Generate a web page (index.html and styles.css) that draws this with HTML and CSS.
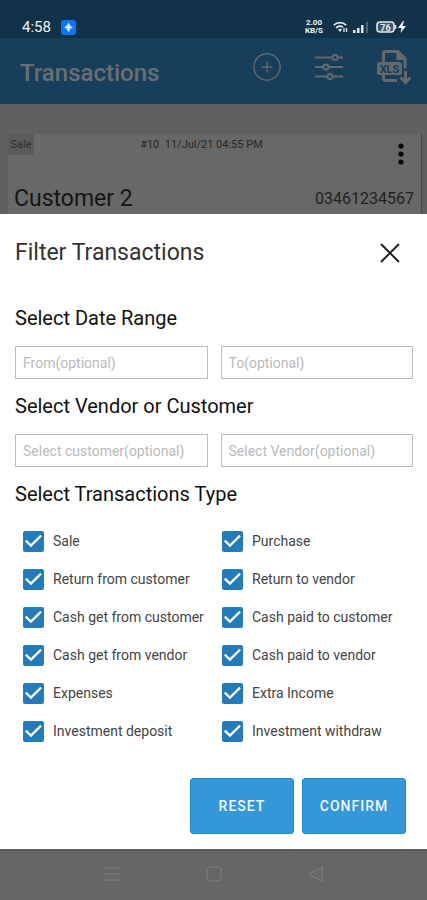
FILE: index.html
```html
<!DOCTYPE html>
<html lang="en">
<head>
<meta charset="utf-8">
<meta name="viewport" content="width=device-width, initial-scale=1">
<title>Filter Transactions</title>
<link rel="stylesheet" href="styles.css">
</head>
<body>
<div class="status">
  <span class="clock">4:58</span>
  <svg class="badge" width="15" height="15" viewBox="0 0 15 15"><rect width="15" height="15" rx="3" fill="#0b76f5"/><path d="M7.500 2.500L9.500 5.500L12 7.500L9.500 9L7.500 12.500L5.500 9L3 7.500L5.500 5.500Z" fill="#a9d4ff"/><path d="M7.500 5v5M5 7.500h5" stroke="#fff" stroke-width="1"/></svg>
  <span class="speed"><span>2.00</span><span>KB/S</span></span>
  <svg class="wifi" width="15" height="12" viewBox="0 0 15 12" fill="none" stroke="#e4e9ee" stroke-width="1.700"><path d="M.8 4.200C4.300.8 9.700.8 13.200 4.200M3 6.800C5.300 4.800 8.200 4.800 10 6.300"/><path d="M5 8.300L7 11L9 8.300Q7 7 5 8.300Z" fill="#e4e9ee" stroke="none"/><path d="M11 7v4M13.500 7v4" stroke-width="1.300"/></svg>
  <svg class="signal" width="16" height="12" viewBox="0 0 16 12"><path d="M0 9h2.500v3H0zM4 7h2.500v5H4zM8 4h2.500v8H8z" fill="#e4e9ee"/><path d="M13 1h2v11h-2z" fill="#4b6577"/></svg>
  <svg class="battery" width="31" height="14" viewBox="0 0 31 14"><rect x="1" y="2" width="17" height="10" rx="3" fill="#3d586a" stroke="#e4e9ee" stroke-width="1.600"/><path d="M19.500 5v4" stroke="#e4e9ee" stroke-width="1.500"/><text x="9.500" y="10.500" text-anchor="middle" class="battery-level">76</text><path d="M27 1L22 8h3.500L24.500 13L30 6h-3.500L28 1Z" fill="#f4f6f8"/></svg>
</div>
<header class="appbar">
  <h1>Transactions</h1>
  <button type="button" aria-label="Add"><svg width="30" height="30" viewBox="0 0 30 30" fill="none" stroke="#66696c" stroke-width="1.400"><circle cx="15" cy="15" r="13.200"/><path d="M15 9.500v11M9.500 15h11"/></svg></button>
  <button type="button" aria-label="Filter"><svg width="30" height="30" viewBox="0 0 30 30" fill="none" stroke="#66696c" stroke-width="2"><path d="M1 5.500h17M24 5.500h5M1 15h8M15 15h14M1 24.500h12M19 24.500h10"/><circle cx="21" cy="5.500" r="2.600"/><circle cx="12" cy="15" r="2.600"/><circle cx="16" cy="24.500" r="2.600"/></svg></button>
  <button type="button" aria-label="Export XLS"><svg width="36" height="36" viewBox="0 0 36 36" fill="none" stroke="#66696c" stroke-width="3"><path d="M7.500 13V5q0-2.500 2.500-2.500h12l7 7v10M7.500 25v4.500q0 2 2.500 2h11"/><path d="M20.500 2v9h9Z" fill="#66696c" stroke="none"/><rect x="1" y="13" width="25" height="13" rx="2.500" fill="#66696c" stroke="none"/><path d="M29.500 22v11M24.500 28.500l5 5l5-5"/><text x="13.500" y="23.500" text-anchor="middle" class="xls">XLS</text></svg></button>
</header>
<main class="page">
  <article class="card">
    <div class="card-top">
      <span class="tag">Sale</span>
      <span class="ref">#10&nbsp; 11/Jul/21 04:55 PM</span>
      <button type="button" aria-label="More"><svg width="6" height="22" viewBox="0 0 6 22" fill="#0b0b0b"><circle cx="3" cy="3" r="2.600"/><circle cx="3" cy="11" r="2.600"/><circle cx="3" cy="19" r="2.600"/></svg></button>
    </div>
    <div class="card-main"><span class="name">Customer 2</span><span class="phone">03461234567</span></div>
  </article>
</main>
<form class="sheet">
  <div class="sheet-head">
    <h2>Filter Transactions</h2>
    <button type="button" aria-label="Close"><svg width="20" height="20" viewBox="0 0 20 20" fill="none" stroke="#222" stroke-width="2"><path d="M1 1L19 19M19 1L1 19"/></svg></button>
  </div>
  <h3>Select Date Range</h3>
  <div class="fields"><input type="text" aria-label="From" placeholder="From(optional)"><input type="text" aria-label="To" placeholder="To(optional)"></div>
  <h3>Select Vendor or Customer</h3>
  <div class="fields"><input type="text" aria-label="Customer" placeholder="Select customer(optional)"><input type="text" aria-label="Vendor" placeholder="Select Vendor(optional)"></div>
  <h3>Select Transactions Type</h3>
  <div class="types">
    <label><input type="checkbox" checked>Sale</label>
    <label><input type="checkbox" checked>Purchase</label>
    <label><input type="checkbox" checked>Return from customer</label>
    <label><input type="checkbox" checked>Return to vendor</label>
    <label><input type="checkbox" checked>Cash get from customer</label>
    <label><input type="checkbox" checked>Cash paid to customer</label>
    <label><input type="checkbox" checked>Cash get from vendor</label>
    <label><input type="checkbox" checked>Cash paid to vendor</label>
    <label><input type="checkbox" checked>Expenses</label>
    <label><input type="checkbox" checked>Extra Income</label>
    <label><input type="checkbox" checked>Investment deposit</label>
    <label><input type="checkbox" checked>Investment withdraw</label>
  </div>
  <div class="actions"><button type="reset">RESET</button><button type="submit">CONFIRM</button></div>
</form>
<nav class="sysnav">
  <button type="button" aria-label="Recents"><svg width="16" height="16" viewBox="0 0 16 16" fill="none" stroke="#7c7c7c" stroke-width="1.200"><path d="M0 2h16M0 8h16M0 14h16"/></svg></button>
  <button type="button" aria-label="Home"><svg width="16" height="16" viewBox="0 0 16 16" fill="none" stroke="#7c7c7c" stroke-width="1.200"><rect x="1" y="1" width="14" height="14" rx="3"/></svg></button>
  <button type="button" aria-label="Back"><svg width="16" height="16" viewBox="0 0 16 16" fill="none" stroke="#7c7c7c" stroke-width="1.200" stroke-linejoin="round"><path d="M14 1v14L1 8Z"/></svg></button>
</nav>
</body>
</html>
```
FILE: styles.css
```css
* { box-sizing: border-box; }

body {
  margin: 0;
  min-height: 100vh;
  display: flex;
  flex-direction: column;
  background: #606060;
  color: #222;
  font-family: Roboto, sans-serif;
}

h1, h2, h3 { margin: 0; font-weight: 400; }
svg { display: block; }

button {
  padding: 0;
  border: 0;
  background: none;
  font-family: inherit;
}

.status {
  height: 38px;
  display: flex;
  align-items: center;
  padding: 16px 20px 0 22px;
  background: #113249;
  color: #eef2f5;
}
.clock { font-size: 15px; }
.badge { margin-left: 10px; }
.speed {
  margin-left: auto;
  display: flex;
  flex-direction: column;
  align-items: center;
  font-size: 8px;
  line-height: 8px;
  font-weight: 700;
}
.wifi { margin-left: 10px; }
.signal { margin-left: 5px; }
.battery { margin-left: 7px; }
.battery-level { font-size: 9px; font-weight: 700; fill: #e4e9ee; }

.appbar {
  height: 66px;
  display: flex;
  align-items: center;
  gap: 32px;
  padding: 0 15px 0 20px;
  background: #173e5a;
}
.appbar h1 {
  flex: 1;
  padding-top: 3px;
  color: #6b6e71;
  font-size: 24px;
  font-weight: 500;
}
.appbar button { padding-bottom: 8px; }
.xls { font-size: 11px; font-weight: 700; fill: #173e5a; stroke: none; }

.page {
  flex: 1 0 110px;
  min-height: 0;
  overflow: hidden;
  padding: 30px 5px 0 8px;
}
.card {
  background: #686868;
  border-right: 1px solid #464646;
}
.card-top {
  display: grid;
  grid-template-columns: 32% 1fr auto;
  align-items: start;
  font-size: 11px;
  line-height: 21px;
}
.tag {
  justify-self: start;
  width: 26px;
  text-align: center;
  background: #5b5b5b;
  color: #303030;
}
.ref { color: #282828; }
.card-top button { padding: 9px 17px 0 0; }
.card-main {
  display: flex;
  align-items: center;
  justify-content: space-between;
  height: 66px;
  padding: 0 7px 0 6px;
}
.name { color: #151515; font-size: 23px; }
.phone { color: #222; font-size: 16px; }

.sheet {
  padding: 0 14px 15px 15px;
  background: #fff;
}
.sheet-head {
  height: 77px;
  display: flex;
  align-items: center;
  justify-content: space-between;
  padding-right: 13px;
}
.sheet h2 { color: #333; font-size: 23px; }
.sheet h3 {
  padding: 15px 0;
  color: #111;
  font-size: 20px;
  line-height: 25px;
}
.fields {
  display: grid;
  grid-template-columns: 1fr 1fr;
  gap: 13px;
}
.fields input {
  width: 100%;
  min-width: 0;
  height: 33px;
  padding: 0 7px;
  border: 1px solid #bcbcbc;
  border-radius: 0;
  background: #fff;
  font: 14px Roboto, sans-serif;
}
.fields input::placeholder { color: #bababa; opacity: 1; }

.types {
  display: grid;
  grid-template-columns: 1fr 1fr;
}
.types label {
  height: 38px;
  display: flex;
  align-items: center;
  gap: 9px;
  padding-left: 8px;
  color: #444;
  font-size: 14px;
  white-space: nowrap;
}
.types input {
  appearance: none;
  flex: none;
  width: 21px;
  height: 21px;
  margin: 0;
  border: 2px solid #247bb9;
  border-radius: 2px;
}
.types input:checked { background: #247bb9; }
.types input:checked::before {
  content: "";
  display: block;
  height: 100%;
  background: #fff;
  clip-path: polygon(0 53%, 9% 43%, 35% 68%, 90% 13%, 99% 23%, 35% 87%);
}

.actions {
  display: flex;
  justify-content: flex-end;
  gap: 8px;
  padding: 28px 7px 0 0;
}
.actions button {
  width: 104px;
  height: 56px;
  border: 1px solid #2488cc;
  border-radius: 3px;
  background: #3397da;
  color: #f2f8fd;
  font-size: 14px;
  font-weight: 500;
  letter-spacing: 1px;
}

.sysnav {
  height: 51px;
  display: flex;
  align-items: center;
  justify-content: center;
  gap: 86px;
  padding-bottom: 3px;
  border-top: 2px solid #5c5c5c;
  background: #666;
}
```
